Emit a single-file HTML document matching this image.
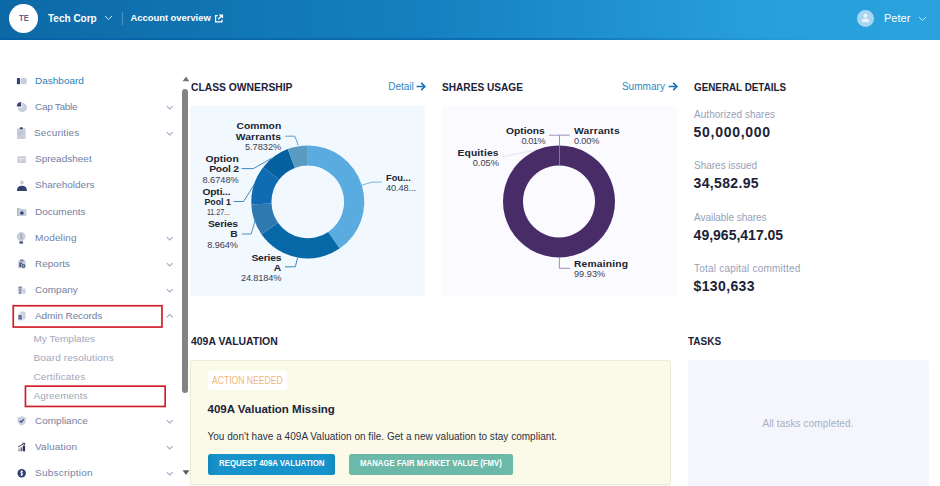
<!DOCTYPE html>
<html><head><meta charset="utf-8">
<style>
*{box-sizing:border-box;margin:0;padding:0}
html,body{width:940px;height:486px;overflow:hidden;background:#fff;font-family:"Liberation Sans",sans-serif;}
.a{position:absolute;white-space:nowrap;line-height:1}
#hdr{position:absolute;left:0;top:0;width:940px;height:39.6px;background:linear-gradient(90deg,#0d69a6 0%,#1580bf 45%,#279fdb 80%,#2aa2de 100%);}
#hdr:after{content:"";position:absolute;left:0;bottom:0;width:100%;height:1.2px;background:linear-gradient(90deg,rgba(0,90,165,.55) 0%,rgba(0,90,165,.5) 55%,rgba(0,90,165,0) 88%)}
.nav{color:#74809f;font-size:10px;transform:scaleY(.93);margin-top:-.6px}
.sub{color:#a0a7be;font-size:10px;letter-spacing:.15px;transform:scaleY(.93)}
.h{color:#1c2238;font-weight:bold;font-size:11.6px;transform-origin:0 50%}
.lbl{color:#979fb8;font-size:10px}
.val{color:#1c2238;font-weight:bold;font-size:14px}
.cl{color:#20222e;font-weight:bold;font-size:10.3px;margin-top:.3px;transform:scaleY(.92)}
.cp{color:#3c4052;font-size:9.2px;margin-top:.3px;transform:scaleY(.92)}
</style></head><body>
<div id="hdr"></div>
<!-- header -->
<div class="a" style="left:9.100px;top:4px;width:28.800px;height:28.800px;border-radius:50%;background:#fff"></div>
<div class="a" style="left:19px;top:13.600px;font-size:9.200px;font-weight:bold;color:#6a6080;transform-origin:0 50%;transform:scaleX(.83)">TE</div>
<div class="a" style="left:48px;top:14.2px;font-size:10px;font-weight:bold;color:#fff">Tech Corp</div>
<svg class="a" style="left:104px;top:15px" width="9" height="6" viewBox="0 0 9 6"><path d="M1 1 L4.5 4.5 L8 1" fill="none" stroke="#cfe4f3" stroke-width="1"/></svg>
<div class="a" style="left:122px;top:12px;width:1px;height:13px;background:#4a93c4"></div>
<div class="a" style="left:130.500px;top:13.200px;font-size:9.4px;font-weight:bold;color:#fff">Account overview</div>
<svg class="a" style="left:214.400px;top:13.800px" width="9.500" height="9.500" viewBox="0 0 9 9"><path d="M3.5 1.5 H1.5 V7.5 H7.5 V5.5 M5 1 H8 V4 M8 1 L4 5" fill="none" stroke="#fff" stroke-width="1.2"/></svg>
<div class="a" style="left:857px;top:10px;width:17px;height:17px;border-radius:50%;background:#a9d6f0"></div>
<svg class="a" style="left:861px;top:13px" width="9" height="10" viewBox="0 0 9 10"><circle cx="4.5" cy="2.8" r="2" fill="#e8f4fb"/><path d="M0.8 9 Q0.8 5.6 4.5 5.6 Q8.2 5.6 8.2 9 Z" fill="#e8f4fb"/></svg>
<div class="a" style="left:884px;top:13px;font-size:11px;color:#fff">Peter</div>
<svg class="a" style="left:918px;top:16px" width="9" height="6" viewBox="0 0 9 6"><path d="M1 1 L4.5 4.5 L8 1" fill="none" stroke="#cfe4f3" stroke-width="1"/></svg>

<!-- sidebar -->

<!-- nav icons -->
<svg class="a" style="left:0;top:60px" width="60" height="426" viewBox="0 60 60 426">
<!-- dashboard -->
<rect x="16.900" y="78" width="3.200" height="6.200" rx=".7" fill="#33436f"/><rect x="21" y="78" width="5.600" height="6.200" rx=".7" fill="#c9cedd"/>
<!-- cap table -->
<path d="M22.300 102.900 A4.600 4.600 0 1 1 17.700 107.500 H22.300 Z" fill="#c9cedd"/><path d="M21.200 106.400 V102 A4.400 4.400 0 0 0 16.800 106.400 Z" fill="#33436f"/>
<!-- securities -->
<rect x="16.900" y="128.200" width="8.700" height="10.700" rx="1" fill="#c9cedd"/><rect x="19.800" y="127.200" width="3" height="2.100" rx=".7" fill="#33436f"/><path d="M18.900 132.300 H22.200 M18.900 134.300 H21.200" stroke="#aeb5ca" stroke-width=".8"/>
<!-- spreadsheet -->
<rect x="17.400" y="156.200" width="8.700" height="6.900" rx=".9" fill="#c9cedd"/><path d="M18.400 158.600 H25.100 M20.700 158.600 V162.100" stroke="#eceef5" stroke-width=".8" fill="none"/>
<!-- shareholders -->
<circle cx="21.900" cy="182.500" r="1.900" fill="#c9cedd"/><path d="M16.900 191.100 Q16.900 185.700 21.950 185.700 Q27 185.700 27 191.100 Z" fill="#33436f"/>
<!-- documents -->
<path d="M17.100 208.700 Q17.100 207.900 17.900 207.900 H20.400 L21.400 209.100 H25.700 Q26.500 209.100 26.500 209.900 V215.200 Q26.500 216 25.700 216 H17.900 Q17.100 216 17.100 215.200 Z" fill="#c9cedd"/><rect x="17.100" y="207.900" width="1.100" height="8.100" fill="#a9b1c8"/><rect x="20.300" y="212" width="3.200" height="2.600" rx=".5" fill="#33436f"/><path d="M21 212.200 V211.500 Q21.900 210.500 22.800 211.500 V212.200" stroke="#33436f" stroke-width=".6" fill="none"/>
<!-- modeling -->
<circle cx="21.200" cy="236.500" r="4.400" fill="#c9cedd"/><path d="M19.300 239.800 H23.100 V241 H19.300 Z" fill="#c9cedd"/><rect x="19.300" y="241.200" width="3.800" height="2.500" rx=".9" fill="#4d5a83"/><path d="M22.300 234.900 Q21.200 234 20.200 234.900 Q19.800 235.900 21.200 236.500 Q22.600 237.100 22.200 238.100 Q21.200 239 20.100 238.100 M21.200 233.600 V239.400" stroke="#98a1bb" stroke-width=".7" fill="none"/>
<!-- reports -->
<rect x="18.200" y="260.300" width="7.400" height="8" rx=".9" fill="#c9cedd"/><rect x="20.200" y="259.500" width="3.400" height="1.700" rx=".5" fill="#66739a"/><path d="M19.300 262.400 H22.300 V264.200 H21 V267 H19.300 Z" fill="#4d5a83"/><circle cx="23.400" cy="266" r="1.900" fill="#4d5a83"/><circle cx="23.400" cy="266" r=".7" fill="#c9cedd"/>
<!-- company -->
<rect x="18" y="286.100" width="4.400" height="7.700" fill="#c9cedd"/><rect x="22.400" y="288.600" width="3.300" height="5.200" fill="#d5d9e5"/><path d="M18.900 287.500 H21.500 M18.900 289.200 H21.500 M18.900 290.900 H21.500" stroke="#66739a" stroke-width=".9"/><rect x="19.600" y="292.200" width="1.200" height="1.600" fill="#33436f"/><path d="M23.300 290 H24.800 M23.300 291.700 H24.800" stroke="#aeb5ca" stroke-width=".7"/>
<!-- admin records -->
<path d="M20.400 311.400 H24.300 Q25.400 311.400 25.400 312.500 V318.300 Q25.400 319.200 24.500 319.200 H20.400 Z" fill="#c9cedd"/><rect x="18.400" y="313" width="5" height="7.400" rx=".7" fill="#d5d9e5"/><path d="M18.400 315.200 H21.800 V319.400 H18.400 Z" fill="#4a5880"/><path d="M19.400 318.400 L21.200 316.200" stroke="#c9cedd" stroke-width=".7"/>
<!-- compliance -->
<path d="M21.700 416.300 L25.700 417.600 V421 Q25.700 424.200 21.700 425.700 Q17.700 424.200 17.700 421 V417.600 Z" fill="#c9cedd"/><path d="M19.800 420.800 L21.200 422.200 L23.700 419.400" stroke="#33436f" stroke-width="1.200" fill="none"/>
<!-- valuation -->
<rect x="18.300" y="448.600" width="1.500" height="2.700" fill="#8e98b5"/><rect x="20.500" y="447.400" width="1.500" height="3.900" fill="#5a6689"/><rect x="22.700" y="445.800" width="2.400" height="5.500" fill="#2f3450"/><path d="M18.100 446.800 L24.400 443.600 M22.300 443.200 L24.900 443.300 L24.200 445.500" stroke="#2f3450" stroke-width=".9" fill="none"/>
<!-- subscription -->
<circle cx="21.700" cy="473.200" r="4.200" fill="#2f3f6b"/><path d="M22.900 471.800 Q21.700 470.900 20.700 471.800 Q20.300 472.700 21.700 473.200 Q23.100 473.700 22.700 474.600 Q21.700 475.500 20.500 474.600 M21.700 470.400 V476" stroke="#fff" stroke-width=".9" fill="none"/>
</svg>
<div class="a nav" style="left:35px;top:77px;color:#2a7fb8">Dashboard</div>
<div class="a nav" style="left:35px;top:103px;letter-spacing:-0.3px">Cap Table</div>
<svg class="a" style="left:165.500px;top:105px" width="7.500" height="5.400" viewBox="0 0 7 5"><path d="M.8 1 L3.5 3.700 L6.200 1" fill="none" stroke="#a3abc2" stroke-width=".95"/></svg>
<div class="a nav" style="left:34px;top:129px;letter-spacing:0.16px">Securities</div>
<svg class="a" style="left:165.500px;top:131px" width="7.500" height="5.400" viewBox="0 0 7 5"><path d="M.8 1 L3.5 3.700 L6.200 1" fill="none" stroke="#a3abc2" stroke-width=".95"/></svg>
<div class="a nav" style="left:35px;top:155px">Spreadsheet</div>
<div class="a nav" style="left:35px;top:181px">Shareholders</div>
<div class="a nav" style="left:35px;top:208px">Documents</div>
<div class="a nav" style="left:35px;top:234px;letter-spacing:0.15px">Modeling</div>
<svg class="a" style="left:165.500px;top:236px" width="7.500" height="5.400" viewBox="0 0 7 5"><path d="M.8 1 L3.5 3.700 L6.200 1" fill="none" stroke="#a3abc2" stroke-width=".95"/></svg>
<div class="a nav" style="left:35px;top:260px">Reports</div>
<svg class="a" style="left:165.500px;top:262px" width="7.500" height="5.400" viewBox="0 0 7 5"><path d="M.8 1 L3.5 3.700 L6.200 1" fill="none" stroke="#a3abc2" stroke-width=".95"/></svg>
<div class="a nav" style="left:35px;top:286px">Company</div>
<svg class="a" style="left:165.500px;top:288px" width="7.500" height="5.400" viewBox="0 0 7 5"><path d="M.8 1 L3.5 3.700 L6.200 1" fill="none" stroke="#a3abc2" stroke-width=".95"/></svg>
<div class="a nav" style="left:35px;top:312px;letter-spacing:-0.1px">Admin Records</div>
<svg class="a" style="left:165.500px;top:313px" width="7.500" height="5.400" viewBox="0 0 7 5"><path d="M.8 4 L3.5 1.300 L6.200 4" fill="none" stroke="#9aa2ba" stroke-width="1"/></svg>
<div class="a nav" style="left:35px;top:417px">Compliance</div>
<svg class="a" style="left:165.500px;top:419px" width="7.500" height="5.400" viewBox="0 0 7 5"><path d="M.8 1 L3.5 3.700 L6.200 1" fill="none" stroke="#a3abc2" stroke-width=".95"/></svg>
<div class="a nav" style="left:35px;top:443px;letter-spacing:0.13px">Valuation</div>
<svg class="a" style="left:165.500px;top:445px" width="7.500" height="5.400" viewBox="0 0 7 5"><path d="M.8 1 L3.5 3.700 L6.200 1" fill="none" stroke="#a3abc2" stroke-width=".95"/></svg>
<div class="a nav" style="left:35px;top:469px;letter-spacing:0.23px">Subscription</div>
<svg class="a" style="left:165.500px;top:471px" width="7.500" height="5.400" viewBox="0 0 7 5"><path d="M.8 1 L3.5 3.700 L6.200 1" fill="none" stroke="#a3abc2" stroke-width=".95"/></svg>
<div class="a sub" style="left:33.5px;top:333.5px;letter-spacing:0px">My Templates</div>
<div class="a sub" style="left:33.5px;top:353px">Board resolutions</div>
<div class="a sub" style="left:33.5px;top:371.5px">Certificates</div>
<div class="a sub" style="left:33.5px;top:390.5px;letter-spacing:0px">Agreements</div>
<svg class="a" style="left:0;top:300px" width="180" height="112" viewBox="0 300 180 112"><rect x="13.250" y="305.750" width="148.700" height="21.300" fill="none" stroke="#d0202c" stroke-width="1.700"/><rect x="25.450" y="386.150" width="139.700" height="20.300" fill="none" stroke="#d0202c" stroke-width="1.700"/></svg>
<!-- scrollbar -->
<div class="a" style="left:182.200px;top:89px;width:6px;height:303.500px;border-radius:3px;background:#838383"></div>
<svg class="a" style="left:181.500px;top:76px" width="8" height="5.500" viewBox="0 0 8 6"><path d="M0.3 5.8 L4 .6 L7.700 5.800 Z" fill="#747474"/></svg>
<svg class="a" style="left:181.500px;top:470.200px" width="8" height="5.500" viewBox="0 0 8 6"><path d="M0.3 .2 L4 5.400 L7.700 .2 Z" fill="#5c5c5c"/></svg>


<!-- main -->

<div class="a h" style="left:190.5px;top:80.8px;transform:scaleX(0.890)">CLASS OWNERSHIP</div>
<div class="a" style="left:388.200px;top:81.700px;font-size:10px;color:#3385c0">Detail</div>
<svg class="a" style="left:416px;top:81.500px" width="10" height="9" viewBox="0 0 10 9"><path d="M.6 4.500 H8.800 M5.200 .9 L8.900 4.500 L5.200 8.100" fill="none" stroke="#1a70b6" stroke-width="1.6"/></svg>
<div class="a" style="left:190px;top:106px;width:235px;height:190px;background:#f1f8fe;border-radius:3px"></div>
<div class="a h" style="left:441.8px;top:80.8px;transform:scaleX(0.873)">SHARES USAGE</div>
<div class="a" style="left:621.900px;top:81.700px;font-size:10px;color:#3385c0;letter-spacing:.05px">Summary</div>
<svg class="a" style="left:667.500px;top:81.500px" width="10" height="9" viewBox="0 0 10 9"><path d="M.6 4.500 H8.800 M5.200 .9 L8.900 4.500 L5.200 8.100" fill="none" stroke="#1a70b6" stroke-width="1.6"/></svg>
<div class="a" style="left:442px;top:106px;width:235px;height:190px;background:#fbfaff;border-radius:3px"></div>
<svg class="a" style="left:0;top:0" width="940" height="486" viewBox="0 0 940 486">
<path d="M307.80 145.40 A56.5 56.5 0 0 1 339.61 248.60 L328.23 231.90 A36.3 36.3 0 0 0 307.80 165.60 Z" fill="#5aabdf"/>
<path d="M339.61 248.60 A56.5 56.5 0 0 1 261.46 234.23 L278.03 222.67 A36.3 36.3 0 0 0 328.23 231.90 Z" fill="#0768a8"/>
<path d="M261.46 234.23 A56.5 56.5 0 0 1 251.36 204.49 L271.54 203.57 A36.3 36.3 0 0 0 278.03 222.67 Z" fill="#2e7ab0"/>
<path d="M251.36 204.49 A56.5 56.5 0 0 1 263.24 167.16 L279.17 179.58 A36.3 36.3 0 0 0 271.54 203.57 Z" fill="#0f6cb2"/>
<path d="M263.24 167.16 A56.5 56.5 0 0 1 287.72 149.09 L294.90 167.97 A36.3 36.3 0 0 0 279.17 179.58 Z" fill="#0560a0"/>
<path d="M287.72 149.09 A56.5 56.5 0 0 1 307.80 145.40 L307.80 165.60 A36.3 36.3 0 0 0 294.90 167.97 Z" fill="#5a9cc1"/>

<g fill="none" stroke-width=".9">
<path d="M285.300 136.200 H294.800 L298.300 145.300" stroke="#4f97bf"/>
<path d="M241.500 168.600 H253.400 L271.700 158.200" stroke="#2a7db5"/>
<path d="M233.500 201.500 H243.600 L254.400 184.200" stroke="#2a7db5"/>
<path d="M241.900 234 H251.200 L255 221" stroke="#3f88b8"/>
<path d="M285 266.800 H295.300 L297.700 257.500" stroke="#2a7db5"/>
<path d="M381.900 182.100 H372.200 L361.700 185.200" stroke="#6ab2e0"/>
</g>
<path d="M559.00 145.40 A56 56 0 1 1 558.99 145.40 L558.99 165.40 A36 36 0 1 0 559.00 165.40 Z" fill="#472c68"/>
<path d="M549 135.200 H569.700 M559.500 135.200 V146" fill="none" stroke="#9585b0" stroke-width=".9"/>
<path d="M559.500 146 V165.200" fill="none" stroke="#8f7aac" stroke-width=".9"/>
<path d="M502.700 156.700 L534.300 150.400" fill="none" stroke="#e2dfea" stroke-width=".9"/>
<path d="M559.400 257 V268.300 H570" fill="none" stroke="#9585b0" stroke-width=".9"/>
</svg>
<div class="a cl" style="right:658.8px;top:120.8px">Common</div>
<div class="a cl" style="right:658.9px;top:131.4px;letter-spacing:0.15px">Warrants</div>
<div class="a cp" style="right:658.8px;top:142.6px">5.7832%</div>
<div class="a cl" style="right:701.3px;top:153.7px">Option</div>
<div class="a cl" style="right:701.1px;top:164.0px;letter-spacing:-0.2px">Pool 2</div>
<div class="a cp" style="right:701.3px;top:175.3px">8.6748%</div>
<div class="a cl" style="right:709.5px;top:186.7px;letter-spacing:-0.15px">Opti...</div>
<div class="a cl" style="right:709.600px;top:196.5px;transform-origin:100% 50%;transform:scale(.855,.92)">Pool 1</div>
<div class="a cp" style="right:709.600px;top:207.7px;transform-origin:100% 50%;transform:scale(.77,.92)">11.27...</div>
<div class="a cl" style="right:702.1px;top:218.7px;letter-spacing:-0.15px">Series</div>
<div class="a cl" style="right:702.3px;top:229.2px">B</div>
<div class="a cp" style="right:702.2px;top:240.3px;letter-spacing:-0.1px">8.964%</div>
<div class="a cl" style="right:658.6px;top:252.4px;letter-spacing:-0.15px">Series</div>
<div class="a cl" style="right:658.8px;top:263.2px">A</div>
<div class="a cp" style="right:658.7px;top:273.9px;letter-spacing:-0.12px">24.8184%</div>
<div class="a cl" style="left:386.0px;top:172.3px;transform-origin:0 50%;transform:scale(.9,.92)">Fou...</div>
<div class="a cp" style="left:386.0px;top:183.3px;letter-spacing:-0.08px">40.48...</div>
<div class="a cl" style="right:395.2px;top:125.3px">Options</div>
<div class="a cp" style="right:394.8px;top:136.4px;letter-spacing:-.45px">0.01%</div>
<div class="a cl" style="left:574px;top:125.3px;letter-spacing:.2px">Warrants</div>
<div class="a cp" style="left:574px;top:136.4px;letter-spacing:-.15px">0.00%</div>
<div class="a cl" style="right:441.3px;top:147.3px;letter-spacing:.15px">Equities</div>
<div class="a cp" style="right:441.2px;top:158.4px">0.05%</div>
<div class="a cl" style="left:574px;top:258.4px;letter-spacing:.18px">Remaining</div>
<div class="a cp" style="left:574px;top:269.6px">99.93%</div>

<div class="a h" style="left:694.1px;top:80.9px;transform:scaleX(0.849)">GENERAL DETAILS</div>
<div class="a lbl" style="left:694.100px;top:109.9px;letter-spacing:0.02px">Authorized shares</div>
<div class="a val" style="left:693.600px;top:124.6px;letter-spacing:0.72px">50,000,000</div>
<div class="a lbl" style="left:694.100px;top:160.8px;letter-spacing:-0.03px">Shares issued</div>
<div class="a val" style="left:693.600px;top:175.6px;letter-spacing:0.34px">34,582.95</div>
<div class="a lbl" style="left:694.100px;top:212.5px;letter-spacing:-0.05px">Available shares</div>
<div class="a val" style="left:693.600px;top:227.7px;letter-spacing:0px">49,965,417.05</div>
<div class="a lbl" style="left:694.100px;top:264.1px;letter-spacing:0.2px">Total capital committed</div>
<div class="a val" style="left:693.600px;top:279.2px;letter-spacing:0.35px">$130,633</div>

<div class="a h" style="left:191px;top:334.6px;transform:scaleX(0.900)">409A VALUATION</div>
<div class="a" style="left:190px;top:360px;width:481px;height:124.500px;background:#fbfae8;border:1px solid #efecd3;border-radius:3px;box-shadow:0 1px 1px rgba(0,0,0,.04)"></div>
<div class="a" style="left:207.500px;top:371.400px;width:79.600px;height:18.600px;background:#fff;border-radius:3px"></div>
<div class="a" style="left:212.200px;top:375.8px;font-size:10px;color:#f0b878;transform-origin:0 50%;transform:scaleX(.859)">ACTION NEEDED</div>
<div class="a" style="left:207.500px;top:403.8px;font-size:11.500px;font-weight:bold;color:#1c2238">409A Valuation Missing</div>
<div class="a" style="left:207.500px;top:432px;font-size:10px;color:#2c3044;letter-spacing:.03px">You don't have a 409A Valuation on file. Get a new valuation to stay compliant.</div>
<div class="a" style="left:207.500px;top:454.200px;width:127.300px;height:20.500px;background:linear-gradient(90deg,#1289bf,#1693ca 8%,#1693ca 92%,#1289bf);border-radius:2.500px"></div>
<div class="a" style="left:207.500px;top:458.2px;width:127.300px;text-align:center;font-size:9.500px;font-weight:bold;color:#fff;transform:scaleX(.826)">REQUEST 409A VALUATION</div>
<div class="a" style="left:349px;top:454.200px;width:164px;height:20.500px;background:#6cb9aa;border-radius:2.500px"></div>
<div class="a" style="left:340px;top:458.2px;width:182px;text-align:center;font-size:9.500px;font-weight:bold;color:#fff;transform:scaleX(.82)">MANAGE FAIR MARKET VALUE (FMV)</div>

<div class="a h" style="left:688.2px;top:334.6px;transform:scaleX(0.861)">TASKS</div>
<div class="a" style="left:687.500px;top:360px;width:241px;height:127px;background:#f4f6fb;border-radius:3px"></div>
<div class="a" style="left:687.500px;top:418.600px;width:241px;text-align:center;font-size:10px;color:#a8afc6;letter-spacing:.11px">All tasks completed.</div>

</body></html>
